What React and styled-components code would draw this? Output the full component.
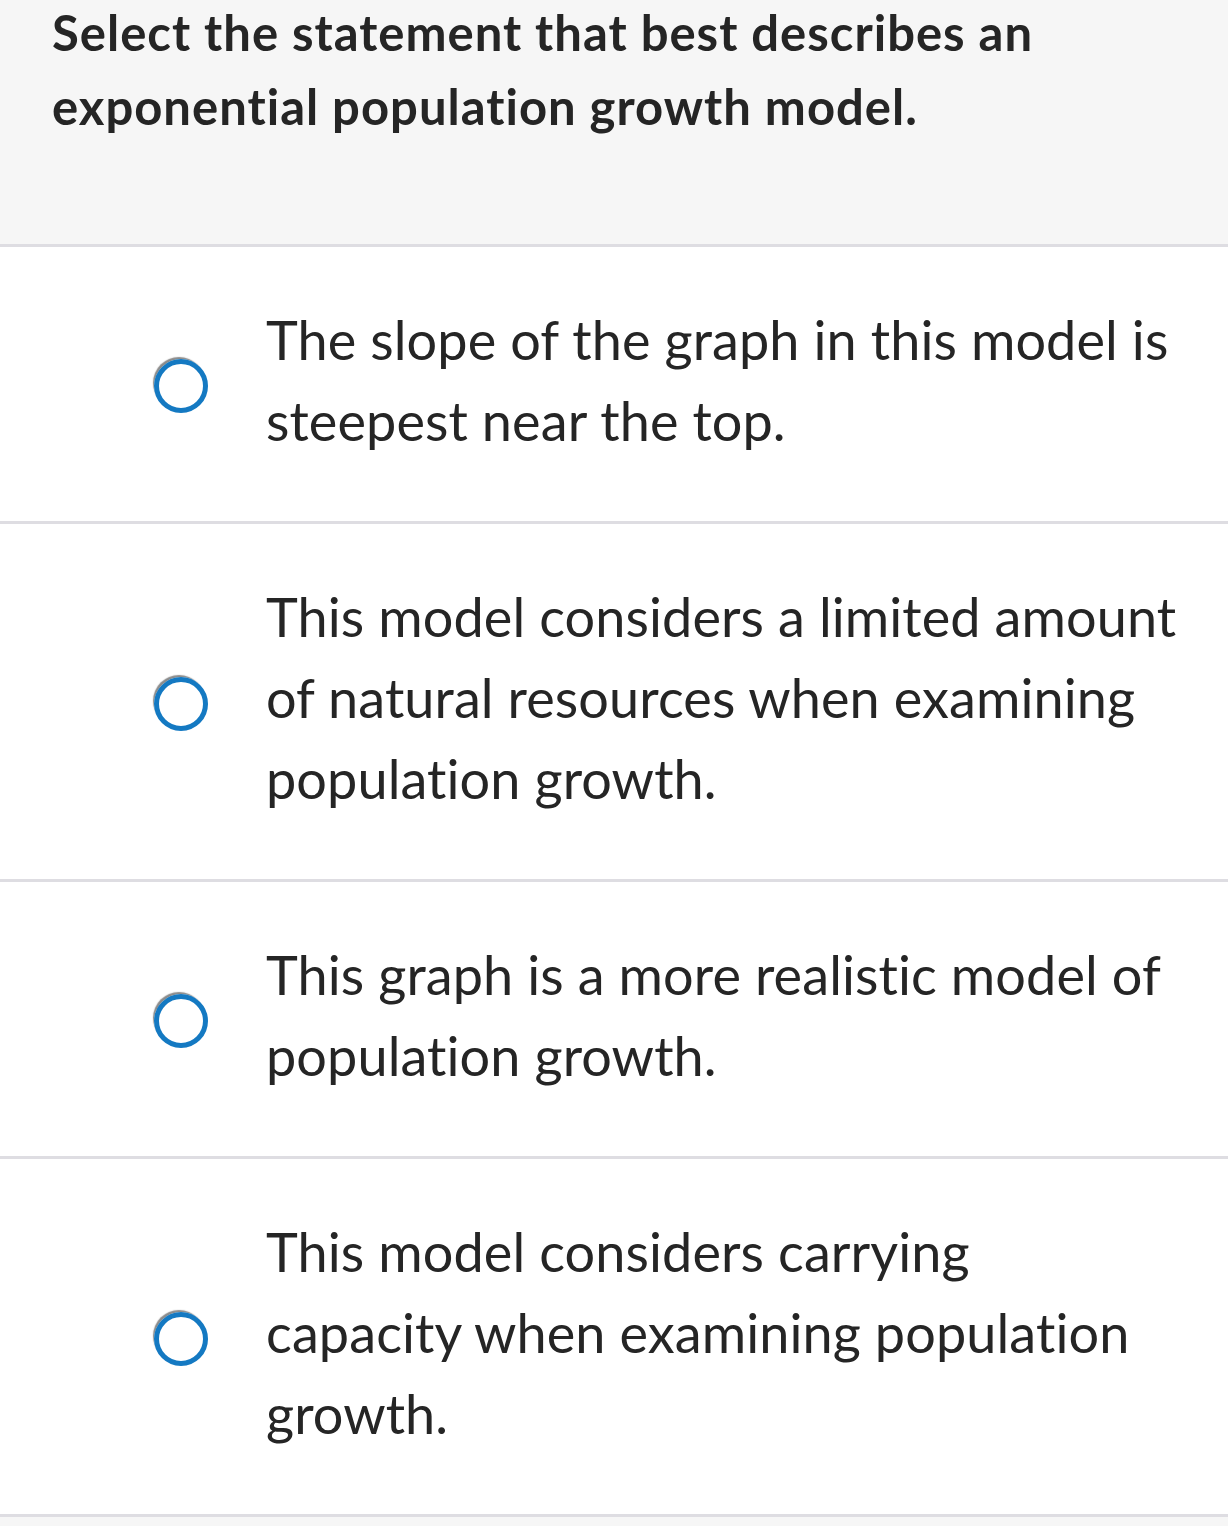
import React from 'react';
import styled, { createGlobalStyle } from 'styled-components';

const GlobalStyle = createGlobalStyle`
  html, body {
    margin: 0;
    padding: 0;
    background: #f6f6f6;
  }
  body {
    font-family: Lato, 'Open Sans', Arial, sans-serif;
    font-variant-ligatures: none;
    color: #252525;
  }
`;

const Page = styled.div`
  width: 1228px;
  min-height: 1526px;
  background: #f6f6f6;
`;

const Header = styled.div`
  display: flex;
  flex-direction: column;
  height: 244px;
  padding: 0 40px 0 52px;
  border-bottom: 3px solid #dedde2;
`;

const Question = styled.p`
  margin: -5px 0 0;
  font-size: 49px;
  font-weight: 700;
  line-height: 74px;
  letter-spacing: 1px;
`;

const List = styled.div`
  background: #fff;
`;

const Option = styled.label`
  display: flex;
  align-items: center;
  padding: 52px 20px 60px 154px;
  border-bottom: 3px solid #dedde2;
  cursor: pointer;
`;

const Radio = styled.span`
  flex: none;
  width: 44px;
  height: 44px;
  border: 5px solid #1479c2;
  border-radius: 50%;
  box-shadow: -2px -3px 1px -1px rgba(90, 90, 90, 0.7);
  margin-right: 58px;
  margin-top: 12px;
`;

const Text = styled.div`
  font-size: 54px;
  line-height: 81px;
  letter-spacing: 0.1px;
`;

const Line = styled.span`
  display: block;
  white-space: nowrap;
`;

const options = [
  ['The slope of the graph in this model is', 'steepest near the top.'],
  ['This model considers a limited amount', 'of natural resources when examining', 'population growth.'],
  ['This graph is a more realistic model of', 'population growth.'],
  ['This model considers carrying', 'capacity when examining population', 'growth.'],
];

const App = () => (
  <Page>
    <GlobalStyle />
    <Header>
      <Question>
        <Line>Select the statement that best describes an</Line>
        <Line>exponential population growth model.</Line>
      </Question>
    </Header>
    <List>
      {options.map((lines, i) => (
        <Option key={i}>
          <Radio />
          <Text>
            {lines.map((l, j) => <Line key={j}>{l}</Line>)}
          </Text>
        </Option>
      ))}
    </List>
  </Page>
);

export default App;
